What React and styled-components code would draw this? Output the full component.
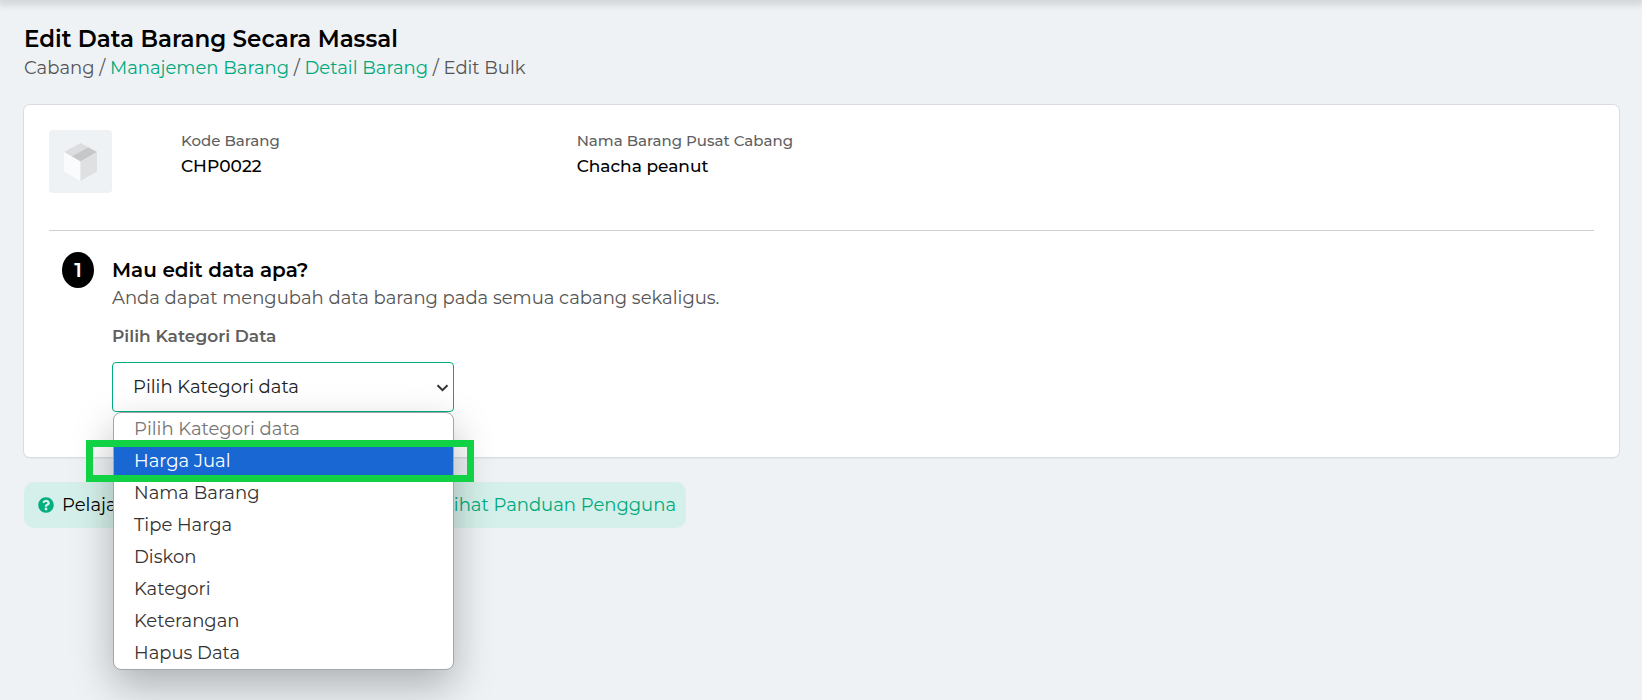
import React, { useState } from "react";
import styled, { createGlobalStyle } from "styled-components";
import { FaQuestionCircle } from "react-icons/fa";


const GlobalStyle = createGlobalStyle`
    * {
        box-sizing: border-box;
    }

    body {
        margin: 0;
        background-color: #eef2f5;
        color: #000;
        font-family: Montserrat, Inter, sans-serif;
        font-size: 18px;
        line-height: 28px;
    }
`

const TopBar = styled.header`
    height: 0;
    box-shadow: 0 0 8px 3px rgba(0, 0, 0, 0.2);
`

const Page = styled.main`
    min-height: 100vh;
    padding: 24px 22px 0 23px;
`

const Title = styled.h1`
    margin: 0;
    padding-left: 1px;
    font-size: 23px;
    font-weight: 600;
    line-height: 30px;
`

const Breadcrumb = styled.nav`
    margin-bottom: 22px;
    padding-left: 1px;
    color: #555;
`

const TextLink = styled.a`
    color: #00a97c;
    text-decoration: none;
`

const Card = styled.section`
    background-color: white;
    border: 1px solid #d9dce3;
    border-radius: 7px;
    padding: 25px;
    padding-bottom: 45px;
    box-shadow: 0 1px 1px rgba(0, 0, 0, 0.04);
`

const ItemInfo = styled.div`
    display: grid;
    grid-template-columns: 132px 28fr 72fr;
    padding-bottom: 37px;
    border-bottom: 1px solid #cfcfcf;
`

const Thumbnail = styled.div`
    display: flex;
    align-items: center;
    justify-content: center;
    width: 63px;
    height: 63px;
    border-radius: 4px;
    background-color: #eef2f5;
`

const Field = styled.dl`
    margin: 0;
`

const FieldLabel = styled.dt`
    font-size: 15px;
    font-weight: 500;
    line-height: 22px;
    color: #5f5f5f;
`

const FieldValue = styled.dd`
    margin: 0;
    font-size: 17px;
    font-weight: 500;
`

const Step = styled.div`
    display: flex;
    gap: 18px;
    padding: 21px 0 0 13px;
`

const StepNumber = styled.span`
    display: flex;
    align-items: center;
    justify-content: center;
    flex-shrink: 0;
    width: 32px;
    height: 36px;
    border-radius: 50%;
    background-color: black;
    color: white;
    font-size: 20px;
    font-weight: 600;
`

const StepBody = styled.div`
    display: flex;
    flex-direction: column;
    padding-top: 4px;
`

const StepTitle = styled.h2`
    margin: 0;
    font-size: 20px;
    font-weight: 600;
    line-height: 28px;
`

const StepText = styled.p`
    margin: 0;
    color: #555;
`

const Label = styled.label`
    margin: 10px 0 12px;
    font-size: 17px;
    font-weight: 600;
    color: #5f5f5f;
`

const Dropdown = styled.div`
    position: relative;
    width: 342px;
`

const Select = styled.select`
    display: block;
    width: 100%;
    height: 50px;
    padding: 0 30px 0 20px;
    appearance: none;
    border: 1px solid #00ae80;
    border-radius: 4px;
    outline: none;
    background-color: white;
    color: #222;
    font: inherit;
`

const Arrow = styled.svg`
    position: absolute;
    top: 22px;
    right: 5px;
    pointer-events: none;
`

const Menu = styled.ul`
    position: absolute;
    top: 100%;
    left: 1px;
    right: 0;
    z-index: 1;
    margin: 0;
    padding: 0;
    list-style: none;
    background-color: white;
    border: 1px solid #a3a5a7;
    border-radius: 8px;
    box-shadow: 0 16px 40px rgba(0, 0, 0, 0.27);
`

const Option = styled.li`
    position: relative;
    padding: 0 20px;
    line-height: 32px;
    cursor: default;
    color: ${props => props.$disabled ? "#757575" : props.$active ? "white" : "#333"};
    background-color: ${props => props.$active ? "#1967d2" : "transparent"};
`

const Highlight = styled.span`
    position: absolute;
    inset: -5px -21px -5px -28px;
    border: 7px solid #11d144;
    pointer-events: none;
`

const HelpBar = styled.aside`
    display: flex;
    align-items: center;
    justify-content: space-between;
    width: 662px;
    max-width: 100%;
    height: 46px;
    margin: 24px 1px 0;
    padding: 0 10px 0 14px;
    border-radius: 10px;
    background-color: #d5f0ea;
`

const HelpText = styled.span`
    display: flex;
    align-items: center;
    gap: 8px;

    svg {
        color: #00ae80;
        font-size: 16px;
    }
`

const categories = [
    "Harga Jual",
    "Nama Barang",
    "Tipe Harga",
    "Diskon",
    "Kategori",
    "Keterangan",
    "Hapus Data",
]


function BoxIcon() {
    return (
        <svg width="33" height="38" viewBox="0 0 32 38" preserveAspectRatio="none" aria-hidden="true">
            <path d="M16 0 32 9 16 18.500 0 9Z" fill="#dcdddf" />
            <path d="M23.500 4.500 32 9 16 18.500 7.500 13.500Z" fill="#c6c7c9" />
            <path d="M0 9 16 18.500V38L0 28.500Z" fill="#fafbfc" />
            <path d="M32 9 16 18.500V38L32 28.500Z" fill="#dfe0e2" />
        </svg>
    )
}


function CategorySelect() {

    const [isOpen, setIsOpen] = useState(true);
    const [value, setValue] = useState("");
    const [active, setActive] = useState("Harga Jual");

    const toggle = (e) => {
        e.preventDefault();
        setIsOpen(!isOpen);
    }

    const choose = (name) => {
        setValue(name);
        setIsOpen(false);
    }

    return (
        <Dropdown>
            <Select
                id="kategori"
                value={value}
                onMouseDown={toggle}
                onChange={(e) => setValue(e.target.value)}
            >
                <option value="" disabled>Pilih Kategori data</option>
                {categories.map((name) => <option key={name} value={name}>{name}</option>)}
            </Select>
            <Arrow width="13" height="8" viewBox="0 0 13 8" aria-hidden="true">
                <path d="M1.500 1.200 6.500 6.200 11.500 1.200" fill="none" stroke="#333" strokeWidth="2" />
            </Arrow>
            {isOpen && (
                <Menu role="listbox" aria-label="Pilih Kategori Data">
                    <Option role="option" aria-disabled="true" $disabled>Pilih Kategori data</Option>
                    {categories.map((name) => (
                        <Option
                            key={name}
                            role="option"
                            aria-selected={name === active}
                            $active={name === active}
                            onMouseEnter={() => setActive(name)}
                            onClick={() => choose(name)}
                        >
                            {name}
                            {name === "Harga Jual" && <Highlight />}
                        </Option>
                    ))}
                </Menu>
            )}
        </Dropdown>
    )
}


function App() {
    return (
        <>
            <GlobalStyle />
            <TopBar />
            <Page>
                <Title>Edit Data Barang Secara Massal</Title>
                <Breadcrumb>
                    Cabang / <TextLink href="#barang">Manajemen Barang</TextLink> / <TextLink href="#detail">Detail Barang</TextLink> / Edit Bulk
                </Breadcrumb>

                <Card>
                    <ItemInfo>
                        <Thumbnail><BoxIcon /></Thumbnail>
                        <Field>
                            <FieldLabel>Kode Barang</FieldLabel>
                            <FieldValue>CHP0022</FieldValue>
                        </Field>
                        <Field>
                            <FieldLabel>Nama Barang Pusat Cabang</FieldLabel>
                            <FieldValue>Chacha peanut</FieldValue>
                        </Field>
                    </ItemInfo>

                    <Step>
                        <StepNumber>1</StepNumber>
                        <StepBody>
                            <StepTitle>Mau edit data apa?</StepTitle>
                            <StepText>Anda dapat mengubah data barang pada semua cabang sekaligus.</StepText>
                            <Label htmlFor="kategori">Pilih Kategori Data</Label>
                            <CategorySelect />
                        </StepBody>
                    </Step>
                </Card>

                <HelpBar>
                    <HelpText><FaQuestionCircle /> Pelajari</HelpText>
                    <TextLink href="#panduan">Lihat Panduan Pengguna</TextLink>
                </HelpBar>
            </Page>
        </>
    )
}

export default App;
